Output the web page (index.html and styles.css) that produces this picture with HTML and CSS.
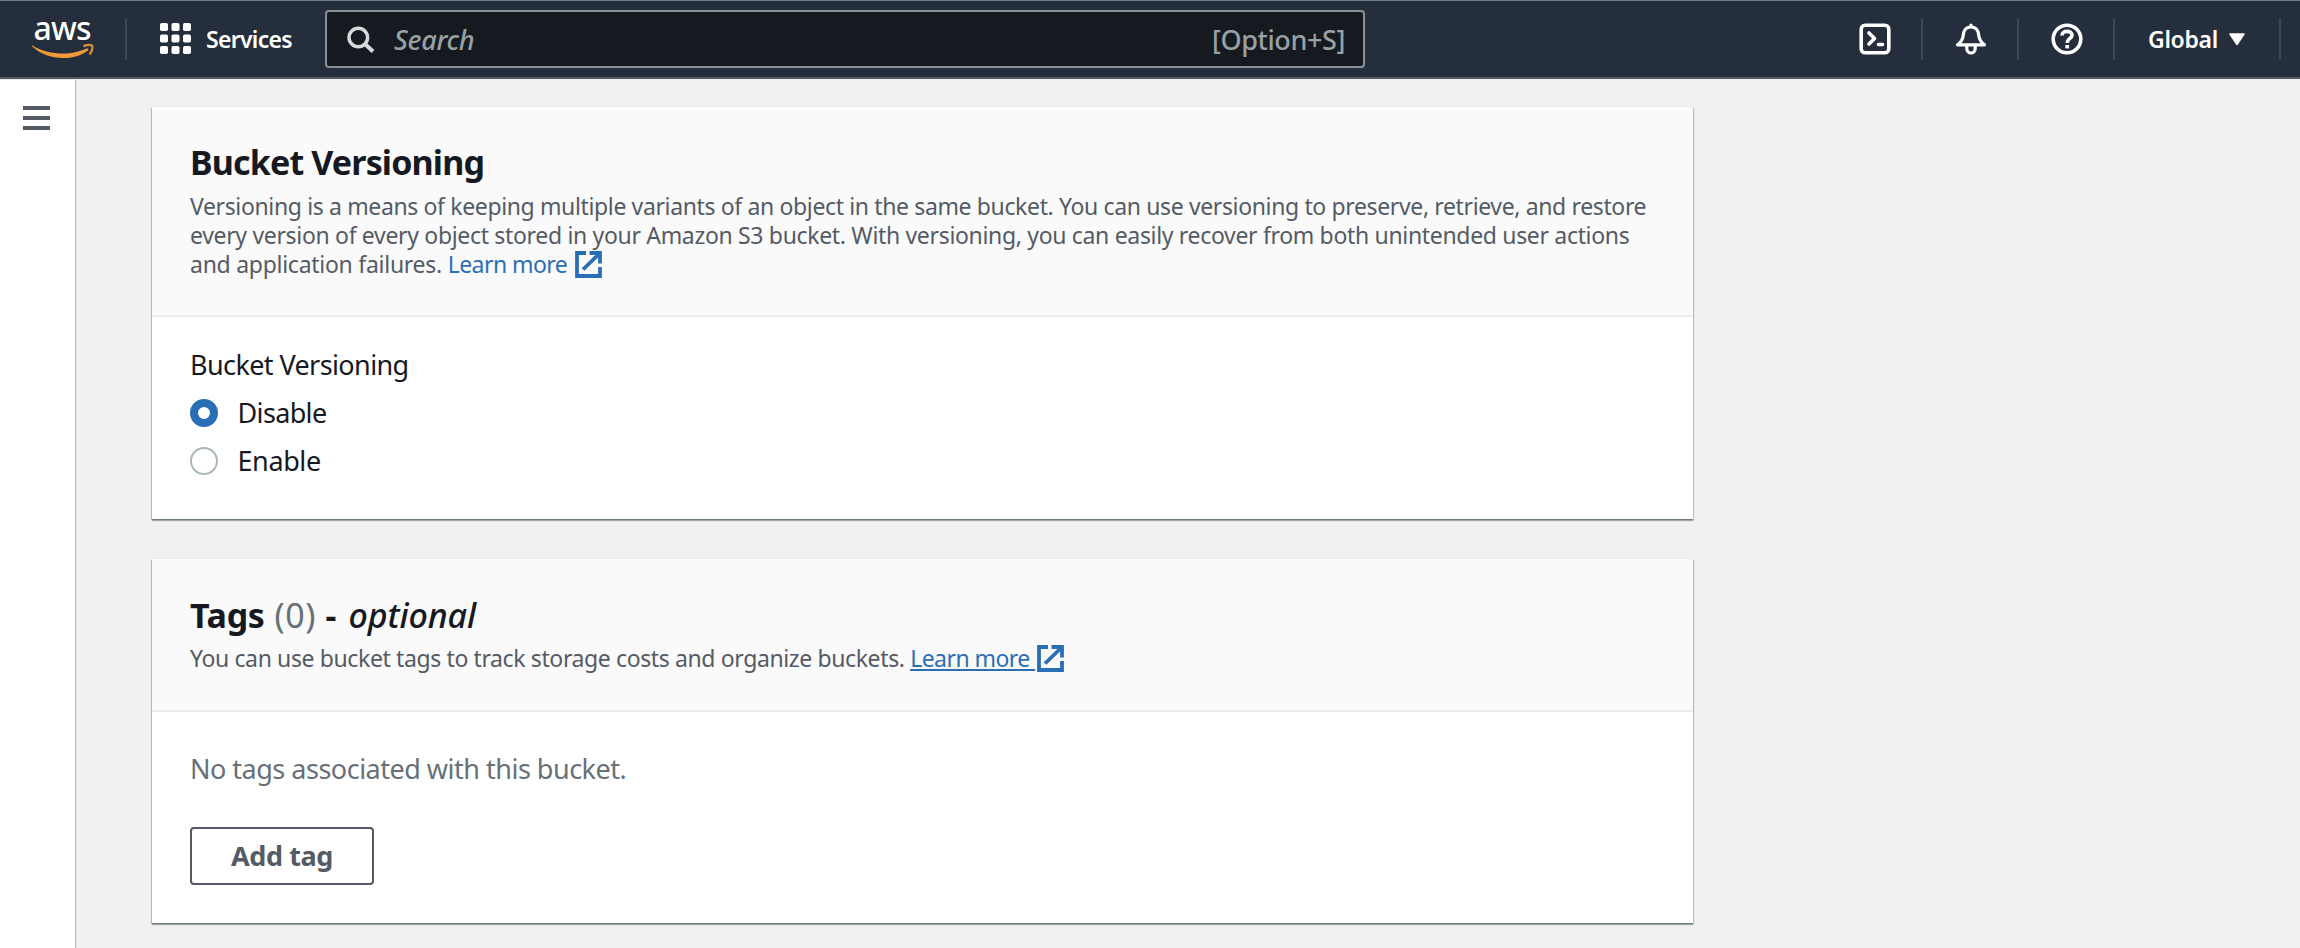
FILE: index.html
```html
<!DOCTYPE html>
<html lang="en">
<head>
<meta charset="utf-8">
<title>Create S3 bucket</title>
<link rel="stylesheet" href="styles.css">
</head>
<body>
<header class="nav">
  <a class="logo">
    <svg width="64" height="56" viewBox="0 -14 64 56">
      <text class="logo-text" x="1.5" y="23">aws</text>
      <path d="M.5 28.5C9 34 20 36.500 31 36.500C40 36.500 48.500 34.400 54.500 31.500C56 31 57.200 32.400 56 33.400C49.500 38.500 40 41 31 41C19 41 8 37 .3 29.600C-.3 29-.1 28.200.5 28.500Z" fill="#f19b38"/>
      <path d="M51.500 29.500C54 27.500 59 27.600 60.200 28.700C61 30.500 59.700 35 57.500 37.500" fill="none" stroke="#d98c38" stroke-width="2.300"/>
    </svg>
  </a>
  <span class="rule rule-logo"></span>
  <a class="services">
    <svg width="31" height="31" viewBox="0 0 31 31" fill="#fff">
      <rect width="8" height="8" rx="1.800"/><rect x="11.500" width="8" height="8" rx="1.800"/><rect x="23" width="8" height="8" rx="1.800"/>
      <rect y="11.500" width="8" height="8" rx="1.800"/><rect x="11.500" y="11.500" width="8" height="8" rx="1.800"/><rect x="23" y="11.500" width="8" height="8" rx="1.800"/>
      <rect y="23" width="8" height="8" rx="1.800"/><rect x="11.500" y="23" width="8" height="8" rx="1.800"/><rect x="23" y="23" width="8" height="8" rx="1.800"/>
    </svg>
    <span class="services-text">Services</span>
  </a>
  <div class="search">
    <svg width="28" height="28" viewBox="0 0 28 28" fill="none" stroke="#d5dbdb" stroke-width="3.400"><circle cx="11.300" cy="11.500" r="9.300"/><path d="M18 18L26 25.500" stroke-width="4"/></svg>
    <span class="search-hint">Search</span>
    <span class="search-key">[Option+S]</span>
  </div>
  <div class="tools">
    <a class="tool">
      <svg width="32" height="32" viewBox="0 0 32 32" fill="none" stroke="#fff" stroke-width="3.600" stroke-linecap="round" stroke-linejoin="round"><rect x="2.200" y="2.200" width="27.600" height="27.600" rx="4"/><path d="M10 10L15.500 15.500L10 21M19.500 21.500H23.500"/></svg>
    </a>
    <a class="tool">
      <svg width="32" height="32" viewBox="0 0 32 32" fill="none" stroke="#fff" stroke-width="3.200" stroke-linejoin="round" stroke-linecap="round"><path d="M16 2V4M16 4C10.500 4 8.500 8.500 8.300 12C8 16.500 5.500 19.500 2.500 21.800H29.500C26.500 19.500 24 16.500 23.700 12C23.500 8.500 21.500 4 16 4Z"/><path d="M11.800 23V25.500C11.800 31.500 20.200 31.500 20.200 25.500V23"/></svg>
    </a>
    <a class="tool">
      <svg width="32" height="32" viewBox="0 0 32 32" fill="none" stroke="#fff" stroke-width="3.600"><circle cx="16" cy="16" r="13.800"/><path d="M11 12.500C11 7 21 7 21 12.200C21 15.500 16.200 15.500 16.200 20"/><path d="M16.200 22V25.400" stroke-width="3.800"/></svg>
    </a>
    <a class="region"><span class="region-text">Global</span>
      <svg width="16" height="13" viewBox="0 0 16 13"><path d="M1 1H15L8 11.500Z" fill="#fff" stroke="#fff" stroke-width="1.500" stroke-linejoin="round"/></svg>
    </a>
  </div>
</header>
<div class="page">
  <aside class="side">
    <svg width="27" height="24" viewBox="0 0 27 24" fill="#545b64"><rect y="0" width="27" height="4"/><rect y="10" width="27" height="4"/><rect y="20" width="27" height="4"/></svg>
  </aside>
  <main class="content">
    <section class="card">
      <div class="card-head">
        <h2 class="title">Bucket Versioning</h2>
        <p class="desc"><span class="line1">Versioning is a means of keeping multiple variants of an object in the same bucket. You can use versioning to preserve, retrieve, and restore</span><br><span class="line2">every version of every object stored in your Amazon S3 bucket. With versioning, you can easily recover from both unintended user actions</span><br><span class="line3">and application failures. </span><a class="link">Learn more <svg class="ext" width="27" height="27" viewBox="0 0 27 27" fill="none" stroke="#2a6fb5" stroke-width="3.800"><path d="M11 2H2V25H25V16"/><path d="M8 18.500L23 4M14.500 2H25V12.500"/></svg></a></p>
      </div>
      <div class="card-body">
        <div class="label">Bucket Versioning</div>
        <label class="option"><span class="radio radio-on"></span><span class="disable">Disable</span></label>
        <label class="option"><span class="radio"></span><span class="enable">Enable</span></label>
      </div>
    </section>
    <section class="card">
      <div class="card-head head-tags">
        <h2 class="title title-tags"><span class="tags">Tags</span><span class="count">(0)</span><span class="dash">-</span><i class="optional">optional</i></h2>
        <p class="desc"><span class="line-tags">You can use bucket tags to track storage costs and organize buckets. </span><a class="link link-hover">Learn more <svg class="ext" width="27" height="27" viewBox="0 0 27 27" fill="none" stroke="#2a6fb5" stroke-width="3.800"><path d="M11 2H2V25H25V16"/><path d="M8 18.500L23 4M14.500 2H25V12.500"/></svg></a></p>
      </div>
      <div class="card-body body-tags">
        <div class="empty">No tags associated with this bucket.</div>
        <button class="button">Add tag</button>
      </div>
    </section>
  </main>
</div>
</body>
</html>
```
FILE: styles.css
```css
* { box-sizing: border-box; }
body {
  margin: 0;
  height: 948px;
  overflow: hidden;
  display: flex;
  flex-direction: column;
  background: #f1f1f1;
  color: #16191f;
  font-family: "Noto Sans", sans-serif;
}
svg { display: block; flex: none; }
h2, p { margin: 0; }

/* Top navigation */
.nav {
  flex: none;
  height: 79px;
  display: flex;
  align-items: flex-start;
  background: #242e3d;
  border-top: 1px solid #757b80;
  border-bottom: 2px solid #535b66;
  color: #fff;
}
.logo { margin: 2px 0 0 32px; }
.logo-text { font-size: 32px; font-weight: 500; letter-spacing: -0.8px; fill: #fff; }
.rule { width: 2px; height: 42px; background: #414750; }
.rule-logo { margin: 17px 33px 0 29px; }
.services { display: flex; margin-top: 22px; width: 165px; gap: 15px; }
.services-text { font-size: 23px; font-weight: 600; line-height: 32px; letter-spacing: -0.7px; }
.search {
  display: flex;
  width: 1040px;
  height: 58px;
  margin-top: 9px;
  padding: 0 18px 0 20px;
  align-items: center;
  background: #16191f;
  border: 2px solid #879196;
  border-radius: 4px;
  color: #95a1a3;
  font-size: 27px;
  font-weight: 500;
}
.search svg { margin-top: 1px; }
.search-hint { margin-left: 19px; font-style: italic; letter-spacing: -0.3px; }
.search-key { margin-left: auto; letter-spacing: -0.4px; }
.tools { display: flex; margin: 17px 19px 0 auto; height: 42px; }
.tool {
  width: 96px;
  padding: 5px 32px 0;
  border-right: 2px solid #414750;
}
.tool:first-child { width: 97px; padding-left: 33px; }
.region {
  width: 166px;
  display: flex;
  padding: 0 0 0 33px;
  gap: 11px;
  border-right: 2px solid #414750;
}
.region svg { margin-top: 15px; }
.region-text { font-size: 23px; font-weight: 600; line-height: 42px; letter-spacing: -0.3px; }

/* Page */
.page { flex: 1; display: flex; padding-top: 1px; }
.side {
  width: 75px;
  padding: 26px 0 0 23px;
  background: #fff;
  box-shadow: 1px 0 1px #b5babd;
}
.content {
  padding: 27px 0 0 77px;
  width: 1618px;
  display: flex;
  flex-direction: column;
  gap: 40px;
}
.card {
  background: #fff;
  box-shadow: 0 -1px 0 #ebeded, 0 2px 1px rgba(0, 28, 36, .3), 1px 1px 1px rgba(0, 28, 36, .2), -1px 1px 1px rgba(0, 28, 36, .2);
}
.card-head {
  padding: 31px 38px 36px;
  background: #fafafa;
  border-bottom: 2px solid #eaeded;
}
.head-tags { padding: 32px 38px 37px; }
.title {
  margin-bottom: 6px;
  font-size: 34px;
  line-height: 48px;
  font-weight: 700;
  letter-spacing: -0.85px;
}
.title-tags { display: flex; margin-bottom: 5px; letter-spacing: 0; }
.tags { width: 84.500px; letter-spacing: -0.3px; }
.count { width: 51px; color: #687078; font-weight: 400; letter-spacing: 0.5px; }
.dash { width: 23px; }
.optional { font-weight: 500; letter-spacing: -0.1px; }
.desc {
  font-size: 23px;
  line-height: 29px;
  color: #545b64;
  white-space: nowrap;
}
.line1 { letter-spacing: -0.365px; }
.line2 { letter-spacing: -0.325px; }
.line3 { letter-spacing: -0.27px; }
.line-tags { letter-spacing: -0.38px; }
.link { color: #2a6fb5; letter-spacing: -0.55px; }
.link-hover { text-decoration: underline; text-decoration-thickness: 2px; text-underline-offset: 2px; }
.ext { display: inline-block; vertical-align: 5px; margin: -10px 0 -10px 2px; }
.card-body {
  padding: 30px 38px 40px;
  font-size: 27px;
  line-height: 36px;
}
.label { letter-spacing: -0.6px; }
.option { display: flex; margin-top: 12px; align-items: center; gap: 19.500px; }
.radio {
  width: 28px;
  height: 28px;
  border: 2px solid #aab7b8;
  border-radius: 50%;
  background: #fff;
}
.radio-on { border: 8px solid #2a6fb5; }
.disable { letter-spacing: -0.65px; }
.enable { letter-spacing: -0.4px; }
.body-tags { padding: 39px 38px 38px; }
.empty { color: #687078; letter-spacing: -0.5px; }
.button {
  display: block;
  margin-top: 40px;
  width: 184px;
  height: 58px;
  padding: 0;
  background: #fff;
  border: 2px solid #545b64;
  border-radius: 4px;
  color: #545b64;
  font: 700 27px/36px "Noto Sans", sans-serif;
  letter-spacing: -0.4px;
}
```
